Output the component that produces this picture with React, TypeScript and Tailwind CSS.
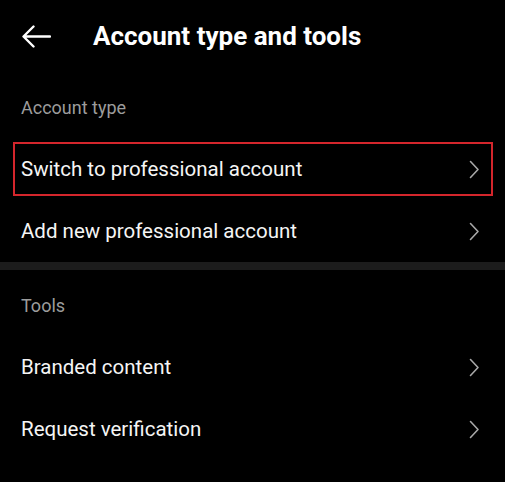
import React from "react";

function Chevron() {
  return (
    <svg width="11" height="19" viewBox="0 0 11 19" fill="none" className="shrink-0">
      <path d="M1.5 1.5 L9 9.5 L1.5 17.5" stroke="#a8a8a8" strokeWidth="1.6" strokeLinecap="round" strokeLinejoin="round" />
    </svg>
  );
}

function Row({ label, highlighted }: { label: string; highlighted?: boolean }) {
  return (
    <div className="relative flex h-[62px] items-center justify-between pl-[21px] pr-[25px]">
      <span className="text-[20.5px] text-[#f5f5f5]">{label}</span>
      <Chevron />
      {highlighted && (
        <div className="pointer-events-none absolute left-[13px] right-[12px] top-[4px] bottom-[4px] border-2 border-[#d4262c]" />
      )}
    </div>
  );
}

function SectionLabel({ children }: { children: React.ReactNode }) {
  return (
    <div className="flex h-[66px] items-start pl-[21px] pt-[24px]">
      <span className="text-[18px] leading-[24px] text-[#9c9c9c]">{children}</span>
    </div>
  );
}

export default function App() {
  return (
    <div className="h-[482px] w-[505px] overflow-hidden bg-black font-['Roboto',sans-serif]">
      <div className="flex h-[72px] items-center">
        <div className="flex w-[93px] items-center pl-[22px]">
          <svg width="29" height="23" viewBox="0 0 29 23" fill="none">
            <path d="M28 11.5 H2 M11.5 1.5 L1.5 11.5 L11.5 21.5" stroke="#fff" strokeWidth="2.4" strokeLinecap="round" strokeLinejoin="round" />
          </svg>
        </div>
        <h1 className="text-[26px] font-bold text-white">Account type and tools</h1>
      </div>

      <SectionLabel>Account type</SectionLabel>
      <Row label="Switch to professional account" highlighted />
      <Row label="Add new professional account" />

      <div className="h-[8px] bg-[#1c1c1c]" />

      <SectionLabel>Tools</SectionLabel>
      <Row label="Branded content" />
      <Row label="Request verification" />
    </div>
  );
}
